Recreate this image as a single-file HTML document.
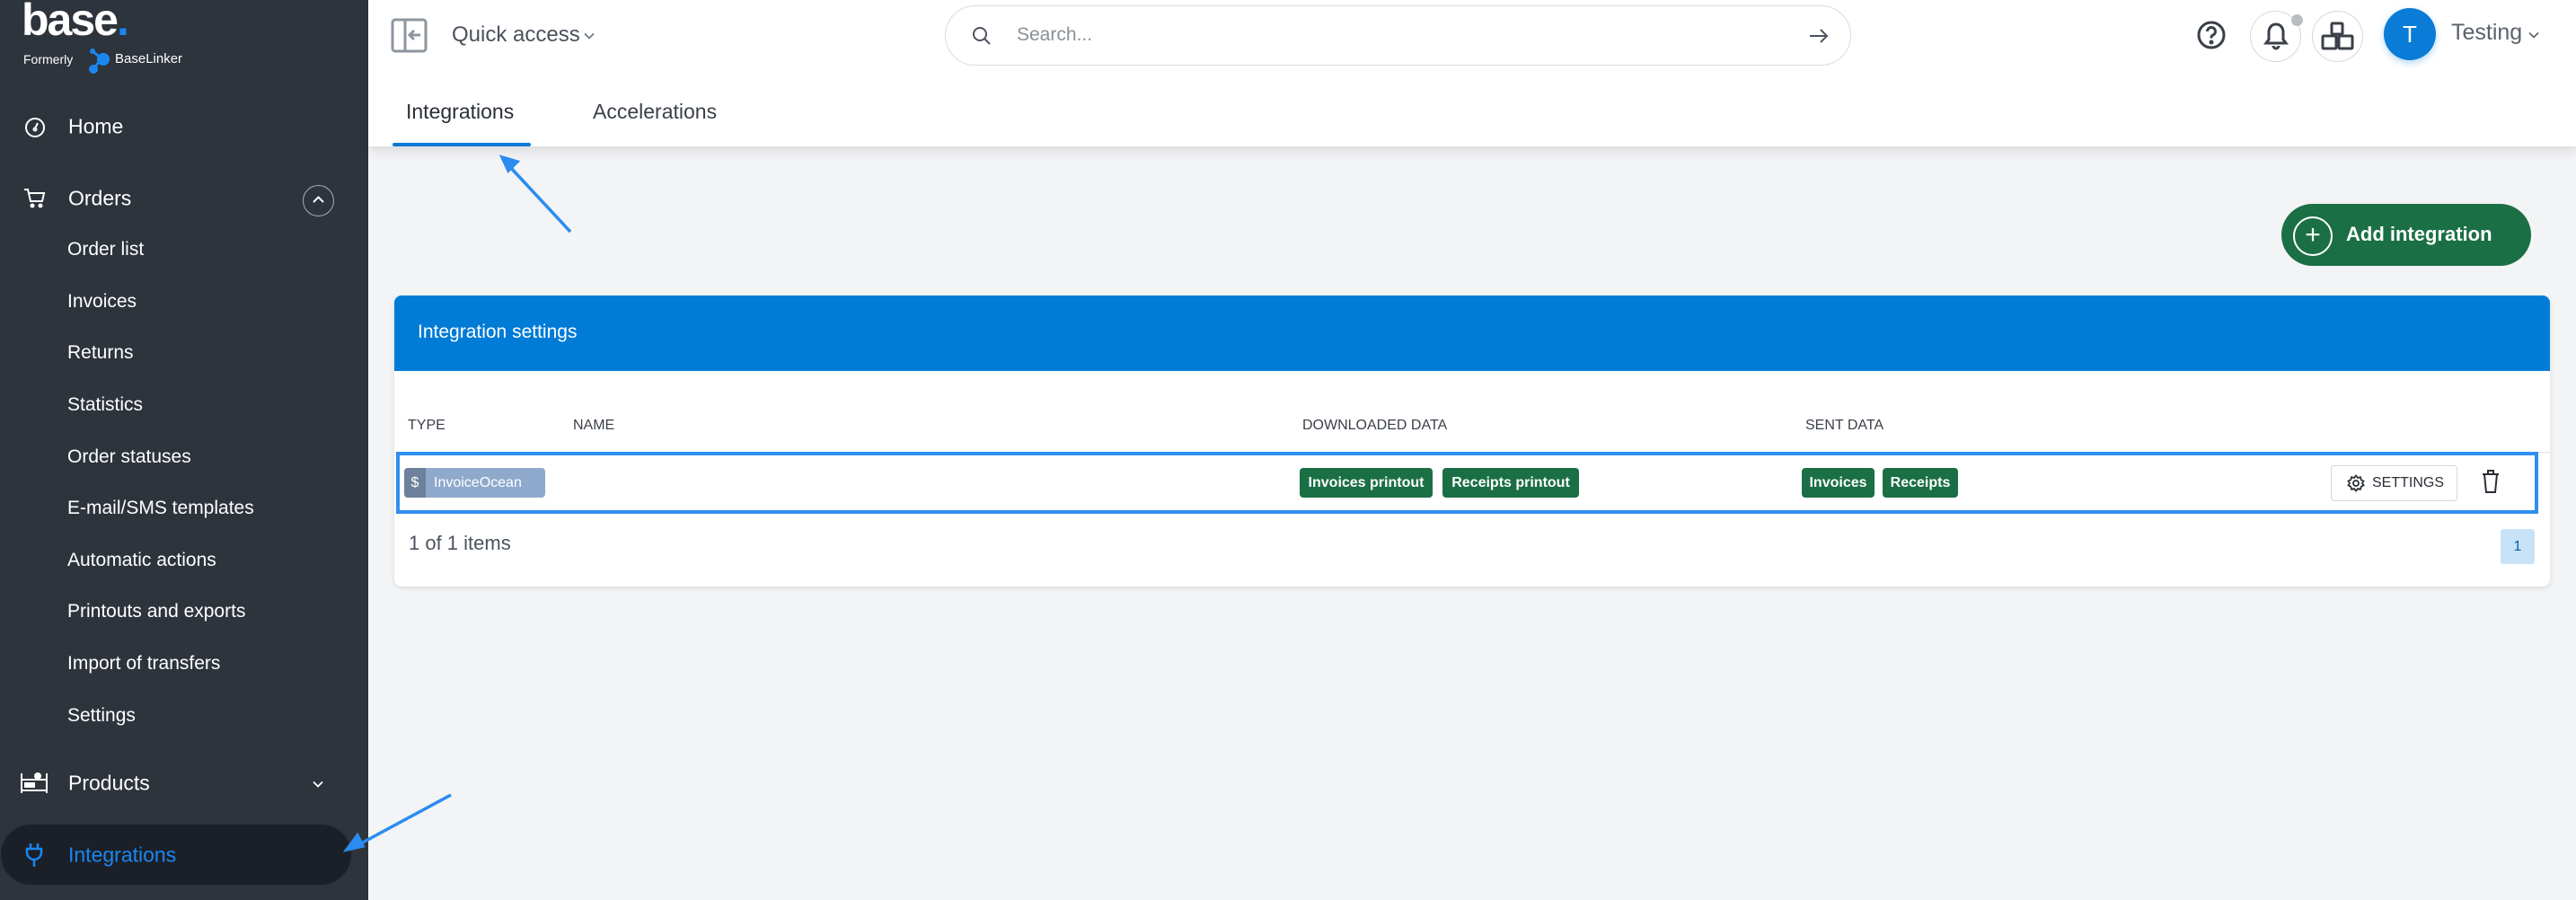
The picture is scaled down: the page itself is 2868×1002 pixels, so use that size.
<!DOCTYPE html>
<html><head><meta charset="utf-8"><style>
*{margin:0;padding:0;box-sizing:border-box}
body{width:2868px;height:1002px;overflow:hidden;background:#f3f4f6;font-family:"Liberation Sans",sans-serif;position:relative}
.a{position:absolute;white-space:nowrap}
#sb{position:absolute;left:0;top:0;width:410px;height:1002px;background:#2e343c}
.sbi{position:absolute;color:#fff;font-size:23px;transform:translateY(-50%)}
.sub{position:absolute;left:75px;color:#fff;font-size:21px;transform:translateY(-50%)}
#hdr{position:absolute;left:410px;top:0;width:2458px;height:163px;background:#fff;box-shadow:0 4px 14px rgba(0,0,0,.12)}
.tag{position:absolute;top:521px;height:33px;background:#1b6f45;color:#fff;font-size:16px;font-weight:bold;border-radius:4px;display:flex;align-items:center;justify-content:center}
.hd{position:absolute;top:474px;transform:translateY(-50%);font-size:16px;color:#3a4049}
</style></head><body>
<div id="sb">
 <div class="a" style="left:24px;top:0px;line-height:44px;color:#fff;font-size:50px;font-weight:bold;letter-spacing:-2px">base<span style="color:#1a86f0">.</span></div>
 <div class="a" style="left:26px;top:58px;color:#fff;font-size:14px">Formerly</div>
 <svg class="a" style="left:98px;top:53px" width="26" height="30" viewBox="0 0 26 30"><circle cx="5" cy="4" r="3" fill="#1a86f0"/><circle cx="17" cy="13" r="7" fill="#1a86f0"/><circle cx="6" cy="24" r="5" fill="#1a86f0"/><path d="M5 4 L15 12 L6 24" stroke="#1a86f0" stroke-width="3" fill="none"/></svg>
 <div class="a" style="left:128px;top:57px;color:#fff;font-size:15px">BaseLinker</div>
 <svg class="a" style="left:27px;top:130px" width="24" height="24" viewBox="0 0 24 24" fill="none" stroke="#fff" stroke-width="2"><circle cx="12" cy="12" r="10"/><path d="M12 13l3-6"/><circle cx="12" cy="14" r="1.5"/></svg>
 <div class="sbi" style="left:76px;top:141px">Home</div>
 <svg class="a" style="left:26px;top:208px" width="26" height="26" viewBox="0 0 26 26" fill="none" stroke="#fff" stroke-width="2"><path d="M1 3h4l3 13h13l2-9H7"/><circle cx="10" cy="21" r="1.5" fill="#fff"/><circle cx="19" cy="21" r="1.5" fill="#fff"/></svg>
 <div class="sbi" style="left:76px;top:221px">Orders</div>
 <div class="a" style="left:337px;top:206px;width:35px;height:35px;border:1.5px solid #aab;border-radius:50%"></div>
 <svg class="a" style="left:348px;top:218px" width="13" height="9" viewBox="0 0 13 9" fill="none" stroke="#fff" stroke-width="2"><path d="M1 7l5.5-5.5L12 7"/></svg>
 <div class="sub" style="top:278px">Order list</div>
 <div class="sub" style="top:336px">Invoices</div>
 <div class="sub" style="top:393px">Returns</div>
 <div class="sub" style="top:451px">Statistics</div>
 <div class="sub" style="top:509px">Order statuses</div>
 <div class="sub" style="top:566px">E-mail/SMS templates</div>
 <div class="sub" style="top:624px">Automatic actions</div>
 <div class="sub" style="top:681px">Printouts and exports</div>
 <div class="sub" style="top:739px">Import of transfers</div>
 <div class="sub" style="top:797px">Settings</div>
 <svg class="a" style="left:23px;top:860px" width="30" height="24" viewBox="0 0 30 24" fill="none" stroke="#fff" stroke-width="2"><path d="M1 1v22M29 1v22M1 8h28M1 20h28"/><rect x="5" y="12" width="4" height="4" fill="#fff"/><rect x="11" y="12" width="4" height="4" fill="#fff"/><circle cx="19" cy="4" r="3" fill="#fff"/></svg>
 <div class="sbi" style="left:76px;top:872px">Products</div>
 <svg class="a" style="left:348px;top:869px" width="12" height="8" viewBox="0 0 12 8" fill="none" stroke="#fff" stroke-width="1.8"><path d="M1 1.5l5 5 5-5"/></svg>
 <div class="a" style="left:1px;top:918px;width:390px;height:67px;border-radius:34px;background:#1b2028"></div>
 <svg class="a" style="left:28px;top:938px" width="20" height="28" viewBox="0 0 20 28" fill="none" stroke="#1a86f0" stroke-width="2.5"><path d="M6 1v6M14 1v6M2 7h16v4a8 8 0 0 1-16 0zM10 19v8"/></svg>
 <div class="sbi" style="left:76px;top:952px;color:#1a86f0">Integrations</div>
</div>
<div id="hdr"></div>
<svg class="a" style="left:435px;top:20px" width="41" height="39" viewBox="0 0 41 39" fill="none" stroke="#8d959e" stroke-width="3"><rect x="2" y="2" width="37" height="35" rx="3"/><path d="M16 2v35M33 19H22M26 14l-5 5 5 5"/></svg>
<div class="a" style="left:503px;top:25px;font-size:24px;color:#4a525c">Quick access</div>
<svg class="a" style="left:650px;top:36px" width="12" height="8" viewBox="0 0 12 8" fill="none" stroke="#6a727c" stroke-width="1.6"><path d="M1 1.5l5 5 5-5"/></svg>
<div class="a" style="left:1052px;top:6px;width:1009px;height:67px;border:1.5px solid #d8dce0;border-radius:34px"></div>
<svg class="a" style="left:1082px;top:29px" width="22" height="22" viewBox="0 0 22 22" fill="none" stroke="#4a525c" stroke-width="2"><circle cx="9" cy="9" r="7"/><path d="M14 14l6 6"/></svg>
<div class="a" style="left:1132px;top:27px;font-size:21px;color:#8a9098">Search...</div>
<svg class="a" style="left:2014px;top:32px" width="22" height="16" viewBox="0 0 22 16" fill="none" stroke="#4a525c" stroke-width="2"><path d="M1 8h19M13 1l7 7-7 7"/></svg>
<svg class="a" style="left:2445px;top:22px" width="34" height="34" viewBox="0 0 34 34" fill="none" stroke="#3a4049" stroke-width="3"><circle cx="17" cy="17" r="14"/><path d="M12.5 13a4.5 4.5 0 1 1 6 4.2c-1 .5-1.5 1.2-1.5 2.3v1"/><circle cx="17" cy="25" r="1" fill="#3a4049"/></svg>
<div class="a" style="left:2505px;top:12px;width:57px;height:57px;border:1px solid #d4d8dc;border-radius:50%"></div>
<svg class="a" style="left:2520px;top:24px" width="28" height="32" viewBox="0 0 28 32" fill="none" stroke="#3a4049" stroke-width="3"><path d="M14 3c-5 0-8 4-8 9v8l-3 4h22l-3-4v-8c0-5-3-9-8-9zM11 27a3 3 0 0 0 6 0"/></svg>
<div class="a" style="left:2551px;top:16px;width:13px;height:13px;border-radius:50%;background:#b9bdc3"></div>
<div class="a" style="left:2574px;top:12px;width:57px;height:57px;border:1px solid #d4d8dc;border-radius:50%"></div>
<svg class="a" style="left:2584px;top:24px" width="38" height="32" viewBox="0 0 38 32" fill="none" stroke="#3a4049" stroke-width="3"><rect x="12" y="2" width="12" height="12" rx="1"/><rect x="2" y="16" width="15" height="14" rx="1"/><rect x="20" y="16" width="15" height="14" rx="1"/></svg>
<div class="a" style="left:2654px;top:9px;width:58px;height:58px;border-radius:50%;background:#0a7bd6;color:#fff;font-size:26px;text-align:center;line-height:58px;box-shadow:0 3px 8px rgba(10,123,214,.3)">T</div>
<div class="a" style="left:2729px;top:22px;font-size:25px;color:#5a626c">Testing</div>
<svg class="a" style="left:2815px;top:35px" width="12" height="8" viewBox="0 0 12 8" fill="none" stroke="#5a626c" stroke-width="1.6"><path d="M1 1.5l5 5 5-5"/></svg>
<div class="a" style="left:452px;top:111px;font-size:23px;color:#2a2f36">Integrations</div>
<div class="a" style="left:660px;top:111px;font-size:23px;color:#3a4049">Accelerations</div>
<div class="a" style="left:437px;top:159px;width:154px;height:4px;background:#0a7bd6;border-radius:2px"></div>
<svg class="a" style="left:0;top:0" width="2868" height="1002"><g stroke="#2a8cf0" stroke-width="3.5" fill="#2a8cf0"><path d="M635 258L568 186"/><path d="M559 175l17 5-10 10z"/><path d="M502 885L400 940"/><path d="M386 946l12-16 6 12z"/></g></svg>
<div class="a" style="left:2540px;top:227px;width:278px;height:69px;border-radius:35px;background:#1b6f45"></div>
<div class="a" style="left:2553px;top:241px;width:44px;height:44px;border:2.5px solid #fff;border-radius:50%;color:#fff;text-align:center;line-height:38px;font-size:30px;font-weight:300">+</div>
<div class="a" style="left:2612px;top:248px;font-size:22px;font-weight:bold;color:#fff">Add integration</div>
<div class="a" style="left:439px;top:329px;width:2400px;height:324px;background:#fff;border-radius:8px;box-shadow:0 2px 6px rgba(0,0,0,.1);overflow:hidden"><div style="height:84px;background:#007bd6"></div></div>
<div class="a" style="left:465px;top:358px;font-size:21px;color:#fff">Integration settings</div>
<div class="hd" style="left:454px">TYPE</div>
<div class="hd" style="left:638px">NAME</div>
<div class="hd" style="left:1450px">DOWNLOADED DATA</div>
<div class="hd" style="left:2010px">SENT DATA</div>
<div class="a" style="left:2600px;top:503px;width:239px;height:1px;background:#e2e5e8"></div>
<div class="a" style="left:441px;top:503px;width:2385px;height:69px;border:4px solid #2f8ff0"></div>
<div class="a" style="left:450px;top:521px;width:157px;height:33px;border-radius:4px;overflow:hidden;background:#8fa9cc;display:flex;font-size:16px;color:#fff"><div style="width:24px;background:#6e819c;text-align:center;line-height:33px">$</div><div style="padding-left:9px;line-height:33px">InvoiceOcean</div></div>
<div class="tag" style="left:1447px;width:148px">Invoices printout</div>
<div class="tag" style="left:1606px;width:152px">Receipts printout</div>
<div class="tag" style="left:2006px;width:81px">Invoices</div>
<div class="tag" style="left:2096px;width:84px">Receipts</div>
<div class="a" style="left:2595px;top:518px;width:141px;height:40px;border:1px solid #d4d8dc;border-radius:4px;font-size:16px;color:#2a2f36;line-height:38px;padding-left:45px">SETTINGS</div>
<svg class="a" style="left:2613px;top:528px" width="20" height="20" viewBox="0 0 20 20" fill="none" stroke="#2a2f36" stroke-width="1.8"><circle cx="10" cy="10" r="3"/><path d="M10 1.5l2 2.5 3-.8.8 3 2.7 1.5-1.5 2.3 1.5 2.3-2.7 1.5-.8 3-3-.8-2 2.5-2-2.5-3 .8-.8-3L1.5 12.3 3 10 1.5 7.7 4.2 6.2l.8-3 3 .8z"/></svg>
<svg class="a" style="left:2762px;top:522px" width="22" height="28" viewBox="0 0 22 28" fill="none" stroke="#2a2f36" stroke-width="2"><path d="M2 6h18M8 6V2h6v4M4 6l2 20h10l2-20"/></svg>
<div class="a" style="left:455px;top:592px;font-size:22px;color:#4a525c">1 of 1 items</div>
<div class="a" style="left:2784px;top:589px;width:38px;height:39px;background:#c8e3f8;border-radius:3px;color:#0a5fa8;font-size:16px;text-align:center;line-height:39px">1</div>
</body></html>
